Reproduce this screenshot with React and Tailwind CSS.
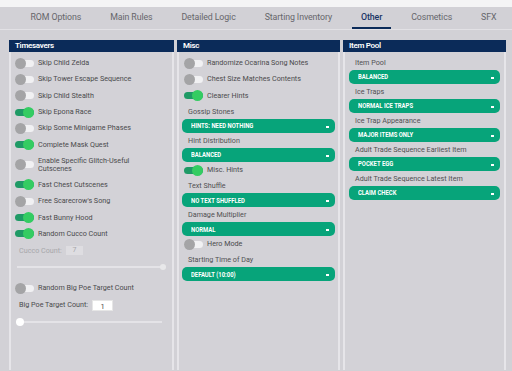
import React from "react";

const tabs = ["ROM Options", "Main Rules", "Detailed Logic", "Starting Inventory", "Other", "Cosmetics", "SFX"];

function Toggle({ on }) {
  return (
    <span className="relative inline-block w-[19px] h-[11px] shrink-0">
      <span className={`absolute left-0 right-0 top-[2px] h-[7px] rounded-full ${on ? "bg-[#1f9a66]" : "bg-[#f1f1f3]"}`}></span>
      <span className={`absolute top-0 w-[11px] h-[11px] rounded-full ${on ? "right-0 bg-[#34cc62]" : "left-0 bg-[#a4a4a6]"}`}></span>
    </span>
  );
}

function ToggleRow({ on, children, tall }) {
  return (
    <div className={`flex items-center gap-[4px] pl-[4px] ${tall ? "h-[24px]" : "h-[16.3px]"}`}>
      <Toggle on={on} />
      <span className="text-[7.2px] leading-[8px] text-[#4a4a4c]">{children}</span>
    </div>
  );
}

function Select({ label, value }) {
  return (
    <div className="pt-[3px]">
      <div className="text-[7.2px] leading-[10px] text-[#505052] pl-[6px] mb-[2px]">{label}</div>
      <div className="h-[14px] rounded-[5px] bg-[#07a47a] flex items-center justify-between pl-[9px] pr-[6px]">
        <span className="inline-block origin-left scale-x-[0.8] whitespace-nowrap text-white font-bold text-[7.4px] uppercase">{value}</span>
        <span className="block w-[3px] h-[2px] bg-white mt-[2px]"></span>
      </div>
    </div>
  );
}

function Panel({ title, children, className }) {
  return (
    <div className={`flex flex-col ${className}`}>
      <div className="h-[12px] bg-[#0b2b59] text-white text-[8px] font-semibold leading-[12px] pl-[6px] tracking-[-0.3px]">{title}</div>
      <div className="flex-1 border-x-2 border-[#e6e5e9] bg-[#d3d2d7] pt-[3px]">{children}</div>
    </div>
  );
}

export default function App() {
  return (
    <div className="w-[512px] h-[371px] overflow-hidden bg-[#f4f4f5] font-['Roboto',sans-serif]">
      <div className="h-[7px]"></div>
      <div className="h-full bg-[#d2d1d6]">
        <div className="h-[23px] flex items-center pl-[16px] border-b border-[#e2e1e5]">
          {tabs.map((t) => (
            <div key={t} className="relative px-[14.5px] h-full flex items-center text-[8.8px] tracking-[-0.1px] text-[#66666b]">
              <span className={t === "Other" ? "text-[#1b3566] font-medium" : ""}>{t}</span>
              {t === "Other" && <span className="absolute bottom-0 left-[6px] right-[6px] h-[2px] bg-[#0b2b59]"></span>}
            </div>
          ))}
        </div>
        <div className="flex gap-[3px] pl-[9px] pt-[10px] h-[340px]">
          <Panel title="Timesavers" className="w-[165px]">
            <ToggleRow>Skip Child Zelda</ToggleRow>
            <ToggleRow>Skip Tower Escape Sequence</ToggleRow>
            <ToggleRow>Skip Child Stealth</ToggleRow>
            <ToggleRow on>Skip Epona Race</ToggleRow>
            <ToggleRow>Skip Some Minigame Phases</ToggleRow>
            <ToggleRow on>Complete Mask Quest</ToggleRow>
            <ToggleRow tall>Enable Specific Glitch-Useful<br />Cutscenes</ToggleRow>
            <ToggleRow on>Fast Chest Cutscenes</ToggleRow>
            <ToggleRow>Free Scarecrow's Song</ToggleRow>
            <ToggleRow on>Fast Bunny Hood</ToggleRow>
            <ToggleRow on>Random Cucco Count</ToggleRow>
            <div className="flex items-center gap-[4px] pl-[8px] h-[18px] text-[7.2px] text-[#a7a7aa]">
              <span>Cucco Count:</span>
              <span className="w-[17px] h-[9px] bg-[#dedde1] text-[7px] leading-[9px] text-center">7</span>
            </div>
            <div className="relative h-[14px] mx-[6px]">
              <div className="absolute left-0 right-[2px] top-[6px] h-[2px] bg-[#e4e3e7]"></div>
              <div className="absolute right-0 top-[4px] w-[6px] h-[6px] rounded-full bg-[#e8e8ea]"></div>
            </div>
            <div className="h-[6px]"></div>
            <ToggleRow>Random Big Poe Target Count</ToggleRow>
            <div className="flex items-center gap-[4px] pl-[8px] h-[19px] text-[7.2px] text-[#4a4a4c]">
              <span>Big Poe Target Count:</span>
              <span className="w-[21px] h-[11px] bg-white text-[7.5px] leading-[11px] text-center border border-[#e6e6e6]">1</span>
            </div>
            <div className="relative h-[14px] mx-[5px]">
              <div className="absolute left-0 right-[5px] top-[6px] h-[2px] bg-[#e4e3e7]"></div>
              <div className="absolute left-0 top-[3px] w-[8px] h-[8px] rounded-full bg-white"></div>
            </div>
          </Panel>
          <Panel title="Misc" className="w-[163px]">
            <div className="pl-[1px] pr-[3px]">
              <ToggleRow>Randomize Ocarina Song Notes</ToggleRow>
              <ToggleRow>Chest Size Matches Contents</ToggleRow>
              <ToggleRow on>Clearer Hints</ToggleRow>
              <div className="pl-[2px]">
                <Select label="Gossip Stones" value="Hints: Need Nothing" />
                <Select label="Hint Distribution" value="Balanced" />
              </div>
              <ToggleRow on>Misc. Hints</ToggleRow>
              <div className="pl-[2px]">
                <Select label="Text Shuffle" value="No Text Shuffled" />
                <Select label="Damage Multiplier" value="Normal" />
              </div>
              <ToggleRow>Hero Mode</ToggleRow>
              <div className="pl-[2px]">
                <Select label="Starting Time of Day" value="Default (10:00)" />
              </div>
            </div>
          </Panel>
          <Panel title="Item Pool" className="w-[163px]">
            <div className="px-[4px]">
              <Select label="Item Pool" value="Balanced" />
              <Select label="Ice Traps" value="Normal Ice Traps" />
              <Select label="Ice Trap Appearance" value="Major Items Only" />
              <Select label="Adult Trade Sequence Earliest Item" value="Pocket Egg" />
              <Select label="Adult Trade Sequence Latest Item" value="Claim Check" />
            </div>
          </Panel>
        </div>
      </div>
    </div>
  );
}
